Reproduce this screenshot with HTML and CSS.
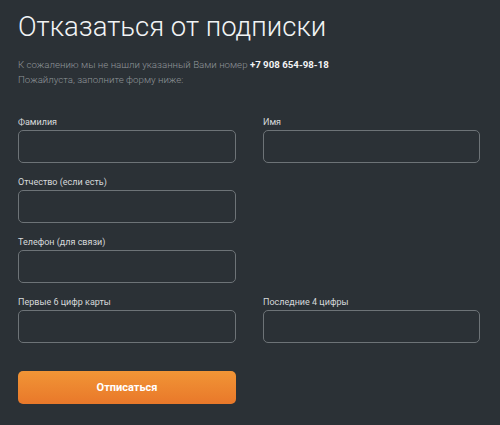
FILE: index.html
```html
<!DOCTYPE html>
<html lang="ru">
<head>
<meta charset="utf-8">
<title>Отказаться от подписки</title>
<link rel="stylesheet" href="styles.css">
</head>
<body>
<main class="page">
  <h1 class="title">Отказаться от подписки</h1>
  <p class="intro">К сожалению мы не нашли указанный Вами номер <b class="phone">+7 908 654-98-18</b><br>Пожайлуста, заполните форму ниже:</p>
  <form class="form">
    <div class="field">
      <label class="label">Фамилия</label>
      <input class="input" type="text">
    </div>
    <div class="field">
      <label class="label">Имя</label>
      <input class="input" type="text">
    </div>
    <div class="field">
      <label class="label">Отчество (если есть)</label>
      <input class="input" type="text">
    </div>
    <div class="field empty"></div>
    <div class="field">
      <label class="label">Телефон (для связи)</label>
      <input class="input" type="text">
    </div>
    <div class="field empty"></div>
    <div class="field">
      <label class="label">Первые 6 цифр карты</label>
      <input class="input" type="text">
    </div>
    <div class="field">
      <label class="label">Последние 4 цифры</label>
      <input class="input" type="text">
    </div>
    <button class="submit" type="button">Отписаться</button>
  </form>
</main>
</body>
</html>
```

FILE: styles.css
```css
html, body {
  margin: 0;
  padding: 0;
  background: #2b3136;
  height: 100%;
}
body {
  font-family: Roboto, "Liberation Sans", sans-serif;
}
.page {
  padding: 11px 0 0 18px;
}
.title {
  margin: 0;
  font-size: 27.5px;
  line-height: 31px;
  font-weight: 300;
  color: #f2f4f5;
}
.intro {
  margin: 15px 0 0;
  font-size: 9.7px;
  line-height: 15px;
  font-weight: 300;
  color: #8f9599;
}
.phone {
  color: #f3f4f5;
  font-weight: 700;
}
.form {
  margin-top: 29px;
  display: grid;
  grid-template-columns: 218px 217px;
  column-gap: 27px;
  row-gap: 13px;
}
.field {
  display: flex;
  flex-direction: column;
}
.label {
  font-size: 9px;
  line-height: 12px;
  color: #d6d9db;
  margin-bottom: 2px;
}
.input {
  box-sizing: border-box;
  height: 33px;
  width: 100%;
  margin: 0;
  background: #2b3136;
  border: 1px solid #6d7377;
  border-radius: 5px;
  outline: none;
}
.submit {
  grid-column: 1;
  margin-top: 15px;
  height: 33px;
  border: none;
  border-radius: 5px;
  background: linear-gradient(#f19536, #e9782a);
  color: #fff;
  font-family: Roboto, "Liberation Sans", sans-serif;
  font-weight: 700;
  font-size: 11px;
  cursor: pointer;
}
```
